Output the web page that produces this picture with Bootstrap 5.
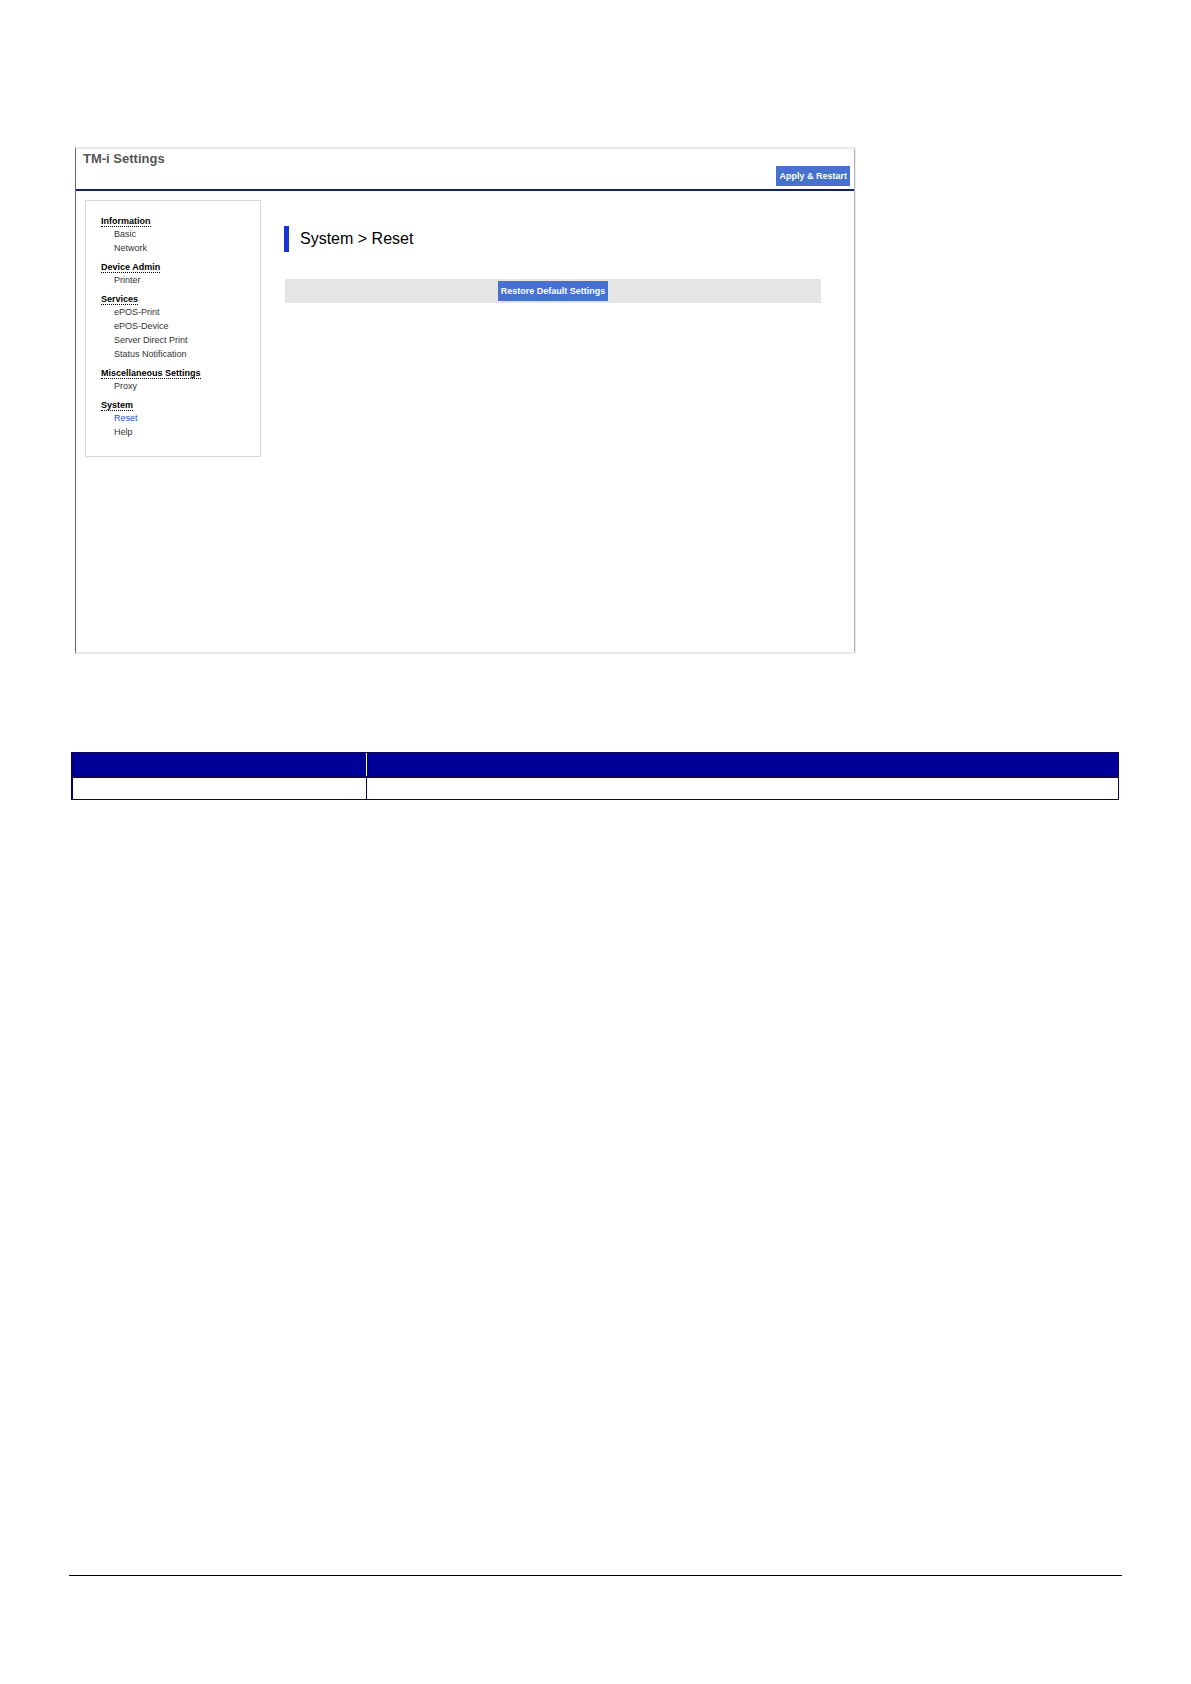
<!DOCTYPE html>
<html lang="en">
<head>
<meta charset="utf-8">
<meta name="viewport" content="width=device-width, initial-scale=1">
<title>TM-i Settings</title>
<link href="https://cdn.jsdelivr.net/npm/bootstrap@5.3.0/dist/css/bootstrap.min.css" rel="stylesheet">
<style>
  body { font-family: "Liberation Sans", Arial, sans-serif; color: #000; background: #fff; }
  .sheet { padding: 147px 69px 108px; }
  .settings-window {
    max-width: 781px; min-height: 507px; margin-left: 6px;
    border: 2px solid #e9e9e9; border-left: 1px solid #666; border-right-width: 1px;
  }
  .settings-inner { border-right: 1px solid #b4b4b4; }
  .app-header { height: 42px; padding: 0 4px 3px 7px; border-bottom: 2px solid #13206e; }
  .app-title { font-size: 13px; line-height: 20px; font-weight: 700; color: #555; }
  .action-btn {
    --bs-btn-color: #fff; --bs-btn-bg: #4870cf; --bs-btn-border-width: 0;
    --bs-btn-hover-color: #fff; --bs-btn-hover-bg: #3a60bb;
    --bs-btn-active-color: #fff; --bs-btn-active-bg: #2f52a6;
    --bs-btn-border-radius: 0; --bs-btn-padding-x: 3px; --bs-btn-padding-y: 4px;
    --bs-btn-font-size: 9px; --bs-btn-line-height: 12px; --bs-btn-font-weight: 700;
  }
  .app-body { padding: 9px 33px 0 9px; gap: 23px; }
  .side-menu { flex: 0 0 176px; border: 1px solid #d8d8d8; padding: 14px 15px 11px; font-size: 9px; }
  .menu-heading { font-size: 9px; line-height: 12px; font-weight: 700; }
  .menu-heading span { border-bottom: 1px dotted #000; }
  .menu-list { padding-left: 13px; margin-bottom: 6px; line-height: 14px; }
  .menu-list a { color: #333; }
  .menu-list a.active { color: #1a50e0; }
  .page-heading {
    margin: 26px 0 27px; padding-left: 11px; border-left: 5px solid #1a33d6;
    font-size: 16px; line-height: 26px; font-weight: 400;
  }
  .action-bar { background: #e5e5e5; padding: 2px; margin-left: 1px; }
  .item-table { margin: 98px 3px 0 2px; --bs-table-bg: transparent; border: 1px solid #10005c; border-left-width: 2px; }
  .item-table table { margin: 0; table-layout: fixed; }
  .item-table th { height: 24px; padding: 0; background: #000099; border-bottom: 2px solid #10005c; }
  .item-table td { height: 22px; padding: 0; border-bottom: 0; }
  .item-table .first-col { width: 293px; }
  .item-table th:first-child { border-right: 1px solid #fff; }
  .item-table td:first-child { border-right: 1px solid #10005c; }
  .sheet-footer { border-top: 1px solid #000; }
</style>
<script src="https://cdn.jsdelivr.net/npm/bootstrap@5.3.0/dist/js/bootstrap.bundle.min.js"></script>
</head>
<body>
<div class="sheet d-flex flex-column min-vh-100">
  <div class="settings-window d-flex flex-column">
    <div class="settings-inner flex-grow-1">
      <header class="app-header d-flex justify-content-between">
        <h1 class="app-title mb-0">TM-i Settings</h1>
        <button type="button" class="btn action-btn align-self-end">Apply &amp; Restart</button>
      </header>
      <div class="app-body d-flex align-items-start">
        <nav class="side-menu" aria-label="Settings">
          <h2 class="menu-heading mb-0"><span>Information</span></h2>
          <ul class="menu-list list-unstyled">
            <li><a class="text-decoration-none" href="#">Basic</a></li>
            <li><a class="text-decoration-none" href="#">Network</a></li>
          </ul>
          <h2 class="menu-heading mb-0"><span>Device Admin</span></h2>
          <ul class="menu-list list-unstyled">
            <li><a class="text-decoration-none" href="#">Printer</a></li>
          </ul>
          <h2 class="menu-heading mb-0"><span>Services</span></h2>
          <ul class="menu-list list-unstyled">
            <li><a class="text-decoration-none" href="#">ePOS-Print</a></li>
            <li><a class="text-decoration-none" href="#">ePOS-Device</a></li>
            <li><a class="text-decoration-none" href="#">Server Direct Print</a></li>
            <li><a class="text-decoration-none" href="#">Status Notification</a></li>
          </ul>
          <h2 class="menu-heading mb-0"><span>Miscellaneous Settings</span></h2>
          <ul class="menu-list list-unstyled">
            <li><a class="text-decoration-none" href="#">Proxy</a></li>
          </ul>
          <h2 class="menu-heading mb-0"><span>System</span></h2>
          <ul class="menu-list list-unstyled">
            <li><a class="text-decoration-none active" href="#" aria-current="page">Reset</a></li>
            <li><a class="text-decoration-none" href="#">Help</a></li>
          </ul>
        </nav>
        <main class="flex-grow-1">
          <h2 class="page-heading">System &gt; Reset</h2>
          <div class="action-bar d-flex justify-content-center">
            <button type="button" class="btn action-btn">Restore Default Settings</button>
          </div>
        </main>
      </div>
    </div>
  </div>

  <div class="item-table">
    <table class="table table-borderless">
      <colgroup><col class="first-col"><col></colgroup>
      <thead><tr><th scope="col"></th><th scope="col"></th></tr></thead>
      <tbody><tr><td></td><td></td></tr></tbody>
    </table>
  </div>

  <footer class="sheet-footer mt-auto"></footer>
</div>
</body>
</html>
